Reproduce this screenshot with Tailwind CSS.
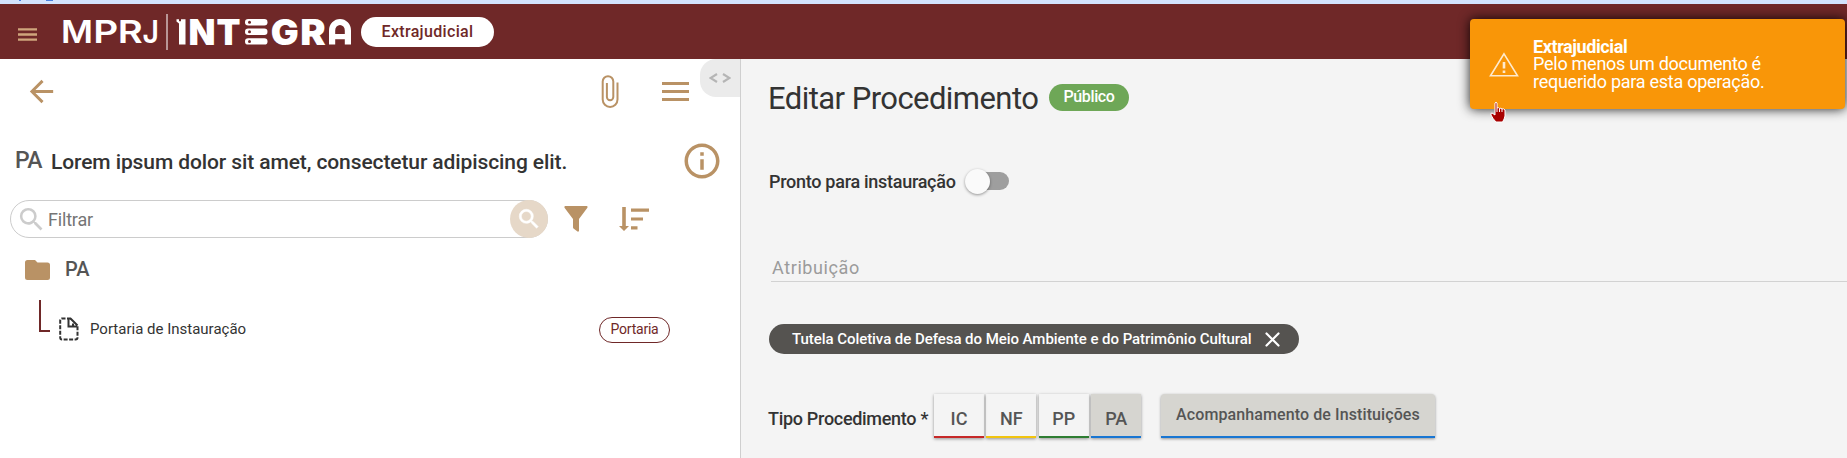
<!DOCTYPE html>
<html lang="pt-BR">
<head>
<meta charset="utf-8">
<title>Integra Extrajudicial</title>
<script src="https://cdn.jsdelivr.net/npm/@tailwindcss/browser@4"></script>
</head>
<body class="relative flex h-[458px] w-[1847px] flex-col overflow-hidden bg-white font-['Roboto',sans-serif] text-[#333]">
  <div class="flex h-1 shrink-0 bg-[#d3e3fd]">
    <span class="ml-[19px] h-px w-0.5 bg-[#4a80e0]"></span><span class="ml-[25px] h-px w-[7px] bg-[#4a80e0]"></span>
  </div>
  <header class="flex h-[55px] shrink-0 items-center bg-[#6f2828]">
    <svg class="ml-[18px] mt-1.5 h-[13px] w-[19px]" viewBox="0 0 19 13" stroke="#cfa57c" stroke-width="2.4"><path d="M0 1.4h19M0 6.5h19M0 11.6h19"/></svg>
    <!-- Wordmark -->
    <svg class="ml-[25px] h-[40px] w-[292px]" viewBox="62 12 292 40" fill="#fff" font-family="Inter, sans-serif">
      <g font-size="31" font-weight="600">
        <text x="61" y="43.3" textLength="32" lengthAdjust="spacingAndGlyphs">M</text>
        <text x="93.3" y="43.3" textLength="25" lengthAdjust="spacingAndGlyphs">P</text>
        <text x="117.8" y="43.3" textLength="25" lengthAdjust="spacingAndGlyphs">R</text>
        <text x="142.5" y="43.3" textLength="16.5" lengthAdjust="spacingAndGlyphs">J</text>
      </g>
      <rect x="166.3" y="14" width="1.4" height="36" fill="#d9c5c5"/>
      <g font-size="35" font-weight="900">
        <path d="M176.500 19.200h2.500v2h2v-2h4.500v25.300h-6.500V23.500l-2.500-2z"/>
        <text x="188.500" y="44.500" textLength="27" lengthAdjust="spacingAndGlyphs">N</text>
        <text x="216.500" y="44.500" textLength="24" lengthAdjust="spacingAndGlyphs">T</text>
        <text x="270.800" y="44.500" textLength="28" lengthAdjust="spacingAndGlyphs">G</text>
        <text x="300.200" y="44.500" textLength="25.500" lengthAdjust="spacingAndGlyphs">R</text>
        <path d="M329 44.500V30.500a11 11.500 0 0 1 22 0v14h-6.200v-5.300h-9.600v5.300zM335.200 34h9.600v-3.500a4.800 5.500 0 0 0-9.600 0z" fill-rule="evenodd"/>
      </g>
      <rect x="245" y="19" width="22.500" height="6.400" rx="3.200"/><rect x="245" y="28.600" width="22.500" height="6.400" rx="3.200"/><rect x="245" y="38.200" width="22.500" height="6.400" rx="3.200"/>
      <g fill="#6f2828"><circle cx="249.500" cy="22.200" r="1.500"/><circle cx="249.500" cy="31.800" r="1.500"/><circle cx="249.500" cy="41.400" r="1.500"/></g>
    </svg>
    <span class="ml-[7px] flex h-[30px] w-[133px] items-center justify-center rounded-full bg-white text-base font-medium tracking-[0.34px] text-[#6f2828]">Extrajudicial</span>
  </header>

  <div class="flex min-h-0 flex-1">
    <aside class="relative flex w-[741px] shrink-0 flex-col border-r border-[#cfcfcf] bg-white">
      <div class="flex h-[65px] items-center">
        <svg class="ml-6 size-[35px]" viewBox="0 0 24 24" fill="#b99265"><path d="M20 11H7.830l5.590-5.590L12 4l-8 8 8 8 1.410-1.410L7.830 13H20v-2z"/></svg>
        <svg class="ml-[542px] h-[33px] w-[18px]" viewBox="0 0 18 33" fill="none" stroke="#b99265" stroke-width="2"><path d="M16.500 7.500v17a7.400 7.400 0 0 1-14.800 0V6.500a5.300 5.300 0 0 1 10.600 0V22a3.200 3.200 0 0 1-6.400 0V8"/></svg>
        <svg class="ml-[43px] h-[19px] w-[27px]" viewBox="0 0 27 19" stroke="#b99265" stroke-width="3"><path d="M0 1.500h27M0 9.500h27M0 17.500h27"/></svg>
      </div>
      <div class="absolute right-0 top-0 flex h-[38px] w-10 items-center justify-center rounded-l-[16px] bg-[#ebebeb]">
        <svg class="h-[10px] w-[22px]" viewBox="0 0 22 10" fill="none" stroke="#b5b5b5" stroke-width="2.200"><path d="M8 1L1.500 5L8 9M14 1l6.500 4L14 9"/></svg>
      </div>
      <div class="flex h-[73px] items-center whitespace-nowrap">
        <span class="ml-[15px] mt-0.5 w-[36px] text-[23px] font-medium tracking-[-0.6px] text-[#555]">PA</span>
        <h2 class="mt-1 text-[21px] font-medium tracking-[-0.1px]">Lorem ipsum dolor sit amet, consectetur adipiscing elit.</h2>
        <svg class="ml-auto mr-[17px] size-[42px]" viewBox="0 0 24 24" fill="#b99265"><path d="M11 7h2v2h-2zm0 4h2v6h-2zm1-9C6.480 2 2 6.480 2 12s4.480 10 10 10 10-4.480 10-10S17.520 2 12 2zm0 18c-4.410 0-8-3.590-8-8s3.590-8 8-8 8 3.590 8 8-3.590 8-8 8z"/></svg>
      </div>
      <div class="mt-[3px] flex h-[38px] items-center">
        <div class="ml-2.5 flex h-[38px] w-[538px] items-center rounded-full border border-[#ccc]">
          <svg class="ml-[5px] size-[31px]" viewBox="0 0 24 24" fill="#ccc"><path id="lens" d="M15.500 14h-.790l-.280-.270A6.471 6.471 0 0 0 16 9.500 6.500 6.500 0 1 0 9.500 16c1.610 0 3.090-.590 4.230-1.570l.270.280v.790l5 4.990L20.490 19l-4.990-5zm-6 0C7.010 14 5 11.990 5 9.500S7.010 5 9.500 5 14 7.010 14 9.500 11.990 14 9.500 14z"/></svg>
          <span class="ml-px mt-0.5 text-lg leading-6 tracking-[-0.180px] text-[#757575]">Filtrar</span>
          <span class="-mr-px ml-auto flex size-[38px] items-center justify-center rounded-full bg-[#e6d8c8]">
            <svg class="size-[26px]" viewBox="0 0 24 24" fill="#fff" stroke="#fff" stroke-width=".5"><use href="#lens"/></svg>
          </span>
        </div>
        <svg class="ml-[16px] h-[26px] w-[24px]" viewBox="0 0 24 26" fill="#b99265"><path d="M1 0h22q1 .8.400 1.800L15 13v12q-.6 1-1.500.6L9.500 22.500q-.5-.5-.5-1.200V13L.5 1.800Q0 .5 1 0z"/></svg>
        <svg class="ml-[31px] h-[24px] w-[30px]" viewBox="0 0 30 24" fill="#b99265"><path d="M3.200 0h3.600v19H10l-5 5-5-5h3.200zM12 1.500h18v3.200H12zM12 10.400h12v3.200H12zM12 19.300h6.500v3.200H12z"/></svg>
      </div>
      <div class="flex h-[62px] items-center">
        <svg class="ml-[25px] mt-px h-5 w-[25px]" viewBox="0 0 25 20" fill="#b99265"><path d="M2.500 0H10l2.500 2.500h10A2.500 2.500 0 0 1 25 5v12.500a2.500 2.500 0 0 1-2.500 2.500h-20A2.500 2.500 0 0 1 0 17.500v-15A2.500 2.500 0 0 1 2.500 0z"/></svg>
        <span class="ml-[15px] text-xl font-medium tracking-[-0.1px] text-[#555]">PA</span>
      </div>
      <div class="flex h-[58px] items-center">
        <span class="ml-[39px] h-[32px] w-[11px] self-start border-b-2 border-l-2 border-[#6f2828]"></span>
        <svg class="ml-[9px] h-[24px] w-5" viewBox="0 0 20 24" fill="none" stroke="#333" stroke-width="2"><path stroke-dasharray="4 1.500" d="M12 1.500H3Q1.200 1.500 1.200 3.500V20.500Q1.200 22.500 3 22.500H16.500Q18.500 22.500 18.500 20.500V9"/><path d="M9.500 1.500V9.500H18M11.500 1.500l7 7M14 9V6.500"/></svg>
        <span class="ml-[11px] w-[509px] text-[15px] leading-5">Portaria de Instauração</span>
        <span class="mt-0.5 flex h-[26px] w-[71px] items-center justify-center rounded-full border border-[#6f2828] pb-0.5 text-sm tracking-[-0.220px] text-[#6f2828]">Portaria</span>
      </div>
    </aside>

    <main class="flex min-w-0 flex-1 flex-col whitespace-nowrap bg-[#f4f4f4] pl-7">
      <div class="flex h-[77px] items-center">
        <h1 class="-ml-px mt-0.5 w-[281px] text-[31px] leading-9 tracking-[-0.560px]">Editar Procedimento</h1>
        <span class="flex h-[27px] w-[80px] items-center justify-center rounded-full bg-[#6ea757] pb-px text-base font-medium tracking-[-0.380px] text-white">Público</span>
      </div>
      <div class="mt-[27px] flex h-[36px] items-center">
        <span class="mt-px w-[196px] text-lg font-medium leading-6 tracking-[-0.280px]">Pronto para instauração</span>
        <span class="flex h-[18px] w-[44px] items-center rounded-full bg-linear-to-r from-transparent from-20% to-[#9e9e9e] to-20%">
          <span class="size-[25px] rounded-full bg-[#fafafa] shadow-[0_1px_3px_rgba(0,0,0,0.4)]"></span>
        </span>
      </div>
      <div class="ml-0.5 mt-[51px] flex h-[32px] items-center border-b border-[#d2d2d2] pt-1">
        <span class="ml-px text-lg leading-6 tracking-[0.600px] text-[#9b9b9b]">Atribuição</span>
      </div>
      <div class="mt-[42px] flex h-[30px] w-[530px] items-center rounded-full bg-[#555350] pl-[23px] text-white">
        <span class="w-[473px] pb-px text-[15px] font-medium leading-5 tracking-[-0.050px]">Tutela Coletiva de Defesa do Meio Ambiente e do Patrimônio Cultural</span>
        <svg class="size-[15px]" viewBox="0 0 15 15" stroke="#fff" stroke-width="2.200" stroke-linecap="round"><path d="M1.500 1.500l12 12M13.500 1.500l-12 12"/></svg>
      </div>
      <div class="mt-10 flex h-11 items-center text-lg font-medium text-[#555]">
        <span class="-ml-px mt-1.5 w-[166px] tracking-[-0.300px] text-[#333]">Tipo Procedimento *</span>
        <div class="flex gap-[2.400px] text-center">
          <span class="h-11 w-[50px] border-b-2 border-[#c62828] pt-[11px] shadow-[0_1px_3px_rgba(0,0,0,0.4)]">IC</span>
          <span class="h-11 w-[50px] border-b-2 border-[#f1c40f] pt-[11px] shadow-[0_1px_3px_rgba(0,0,0,0.4)]">NF</span>
          <span class="h-11 w-[50px] border-b-2 border-[#2e7d32] pt-[11px] shadow-[0_1px_3px_rgba(0,0,0,0.4)]">PP</span>
          <span class="h-11 w-[50px] border-b-2 border-[#1976d2] bg-[#d6d5d0] pt-[11px] shadow-[0_1px_3px_rgba(0,0,0,0.4)]">PA</span>
        </div>
        <span class="ml-[19.800px] h-11 w-[274px] rounded-t-sm border-b-2 border-[#1976d2] bg-[#d6d5d0] pt-[9px] text-center text-base tracking-[0.100px] shadow-[0_1px_3px_rgba(0,0,0,0.4)]">Acompanhamento de Instituições</span>
      </div>
    </main>
  </div>

  <div class="absolute left-[1470px] top-[19px] flex h-[90px] w-[375px] items-center rounded-[4px] bg-[#f99608] text-white shadow-[0_0_12px_rgba(0,0,0,0.9)]">
    <svg class="ml-[19px] h-[25px] w-[30px]" viewBox="0 0 30 25" fill="none" stroke="#fff" stroke-opacity=".8" stroke-width="1.600"><path d="M15 1.800L28.500 23.800H1.500z"/><path stroke-width="2.600" d="M15 10v6.500M15 18.500v2.500"/></svg>
    <div class="ml-[14px] text-lg leading-[18px] tracking-[-0.260px]">
      <p class="font-bold leading-[17px] tracking-[-0.400px]">Extrajudicial</p>
      <p>Pelo menos um documento é<br>requerido para esta operação.</p>
    </div>
  </div>
  <svg class="absolute left-[1490px] top-[101px] h-[22px] w-[17px]" viewBox="0 0 17 22" fill="#a80000" stroke="#fff" stroke-width="1"><path d="M5 2q1-1.500 2 0v5q1.500-1 2.500.5 1.500-.8 2.500.5 1.500-.8 3 1v6q-.5 3-2.500 6H6Q3 18 1 14q-.5-2 1-2l3 2z"/><path d="M7 7v4M9.500 7.500V11M12 8v3"/></svg>
</body>
</html>
